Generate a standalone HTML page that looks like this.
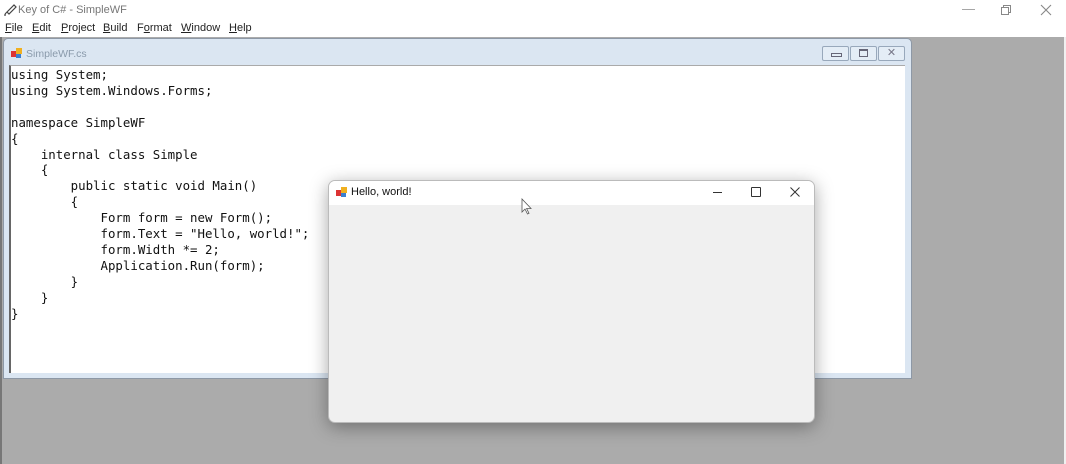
<!DOCTYPE html>
<html><head><style>
body{margin:0;width:1066px;height:464px;overflow:hidden;background:#fff;font-family:"Liberation Sans",sans-serif;position:relative}
.abs{position:absolute}
</style></head><body>
<div class="abs" style="left:0;top:0;width:1066px;height:19px;background:#fff">
 <svg class="abs" style="left:3px;top:2px" width="14" height="14"><path d="M2 12 L5 9 M4 10 L11 3 L13 5 L6 12 Z M3 13 L1 13" stroke="#444" fill="none" stroke-width="1.2"/></svg>
 <span class="abs" style="left:18px;top:4px;font-size:11px;color:#777">Key of C# - SimpleWF</span>
 <span class="abs" style="left:962px;top:1px;font-size:13px;color:#999">—</span>
 <svg class="abs" style="left:1000px;top:4px" width="12" height="12"><rect x="1.5" y="3.5" width="7" height="7" fill="none" stroke="#888"/><path d="M3.5 3.5V1.5H10.5V8.5H8.5" fill="none" stroke="#888"/></svg>
 <svg class="abs" style="left:1040px;top:4px" width="12" height="12"><path d="M1 1L11 11M11 1L1 11" stroke="#888" stroke-width="1.1"/></svg>
</div>
<div class="abs" style="left:0;top:19px;width:1066px;height:18px;background:#fff;font-size:11px;color:#222">
 <span class="abs" style="left:5px;top:3px"><u>F</u>ile</span>
 <span class="abs" style="left:32px;top:3px"><u>E</u>dit</span>
 <span class="abs" style="left:61px;top:3px"><u>P</u>roject</span>
 <span class="abs" style="left:103px;top:3px"><u>B</u>uild</span>
 <span class="abs" style="left:137px;top:3px">F<u>o</u>rmat</span>
 <span class="abs" style="left:181px;top:3px"><u>W</u>indow</span>
 <span class="abs" style="left:229px;top:3px"><u>H</u>elp</span>
</div>
<div class="abs" style="left:0;top:37px;width:1066px;height:427px;background:#ababab"></div>
<div class="abs" style="left:0;top:37px;width:2px;height:427px;background:#777"></div>
<div class="abs" style="left:1064px;top:37px;width:2px;height:427px;background:#f0f0f0"></div>
<div class="abs" style="left:3px;top:38px;width:907px;height:339px;background:#dbe6f2;border:1px solid #8d98a6;border-radius:5px 5px 0 0"></div>
<svg class="abs" style="left:11px;top:47px" width="12" height="12"><rect x="0" y="4" width="5" height="6" fill="#d33"/><rect x="5" y="1" width="6" height="6" fill="#f0b020"/><rect x="5" y="7" width="5" height="4" fill="#3a7fd0"/></svg>
<span class="abs" style="left:26px;top:48px;font-size:10.5px;color:#8a9aab">SimpleWF.cs</span>
<div class="abs" style="left:822px;top:46px;width:25px;height:13px;border:1px solid #98a8bb;border-radius:2px;background:#e4edf6"><div style="margin:6px 0 0 8px;width:9px;height:2px;border:1px solid #667"></div></div>
<div class="abs" style="left:850px;top:46px;width:25px;height:13px;border:1px solid #98a8bb;border-radius:2px;background:#e4edf6"><div style="margin:2px 0 0 8px;width:7px;height:5px;border:1px solid #667;border-top-width:2px"></div></div>
<div class="abs" style="left:878px;top:46px;width:25px;height:13px;border:1px solid #98a8bb;border-radius:2px;background:#e4edf6;font-size:11px;color:#778;text-align:center;line-height:13px">✕</div>
<div class="abs" style="left:9px;top:65px;width:894px;height:307px;background:#fff;border-left:2px solid #666;border-top:1px solid #aaa"></div>
<pre class="abs" style="left:11px;top:67px;margin:0;font-family:'DejaVu Sans Mono','Liberation Mono',monospace;font-size:12.4px;line-height:15.9px;color:#111">using System;
using System.Windows.Forms;

namespace SimpleWF
{
    internal class Simple
    {
        public static void Main()
        {
            Form form = new Form();
            form.Text = "Hello, world!";
            form.Width *= 2;
            Application.Run(form);
        }
    }
}</pre>
<div class="abs" style="left:328px;top:180px;width:485px;height:241px;background:#f0f0f0;border:1px solid #bbb;border-radius:7px;box-shadow:0 4px 18px rgba(0,0,0,.35);overflow:hidden">
 <div style="height:24px;background:#fff;position:relative">
  <svg class="abs" style="left:7px;top:5px" width="12" height="12"><rect x="0" y="4" width="5" height="6" fill="#d33"/><rect x="5" y="1" width="6" height="6" fill="#f0b020"/><rect x="5" y="7" width="5" height="4" fill="#3a7fd0"/></svg>
  <span class="abs" style="left:22px;top:5px;font-size:11px;color:#111">Hello, world!</span>
  <div class="abs" style="left:384px;top:11px;width:9px;height:1px;background:#333"></div>
  <div class="abs" style="left:422px;top:6px;width:8px;height:8px;border:1px solid #333;border-radius:1px"></div>
  <svg class="abs" style="left:461px;top:6px" width="10" height="10"><path d="M0.5 0.5L9.5 9.5M9.5 0.5L0.5 9.5" stroke="#333"/></svg>
 </div>
</div>
<svg class="abs" style="left:521px;top:198px" width="12" height="17"><path d="M1 1V14L4 11L6.5 16L8 15.3L5.6 10.5H10Z" fill="#fff" stroke="#555" stroke-width="0.8"/></svg>
</body></html>
